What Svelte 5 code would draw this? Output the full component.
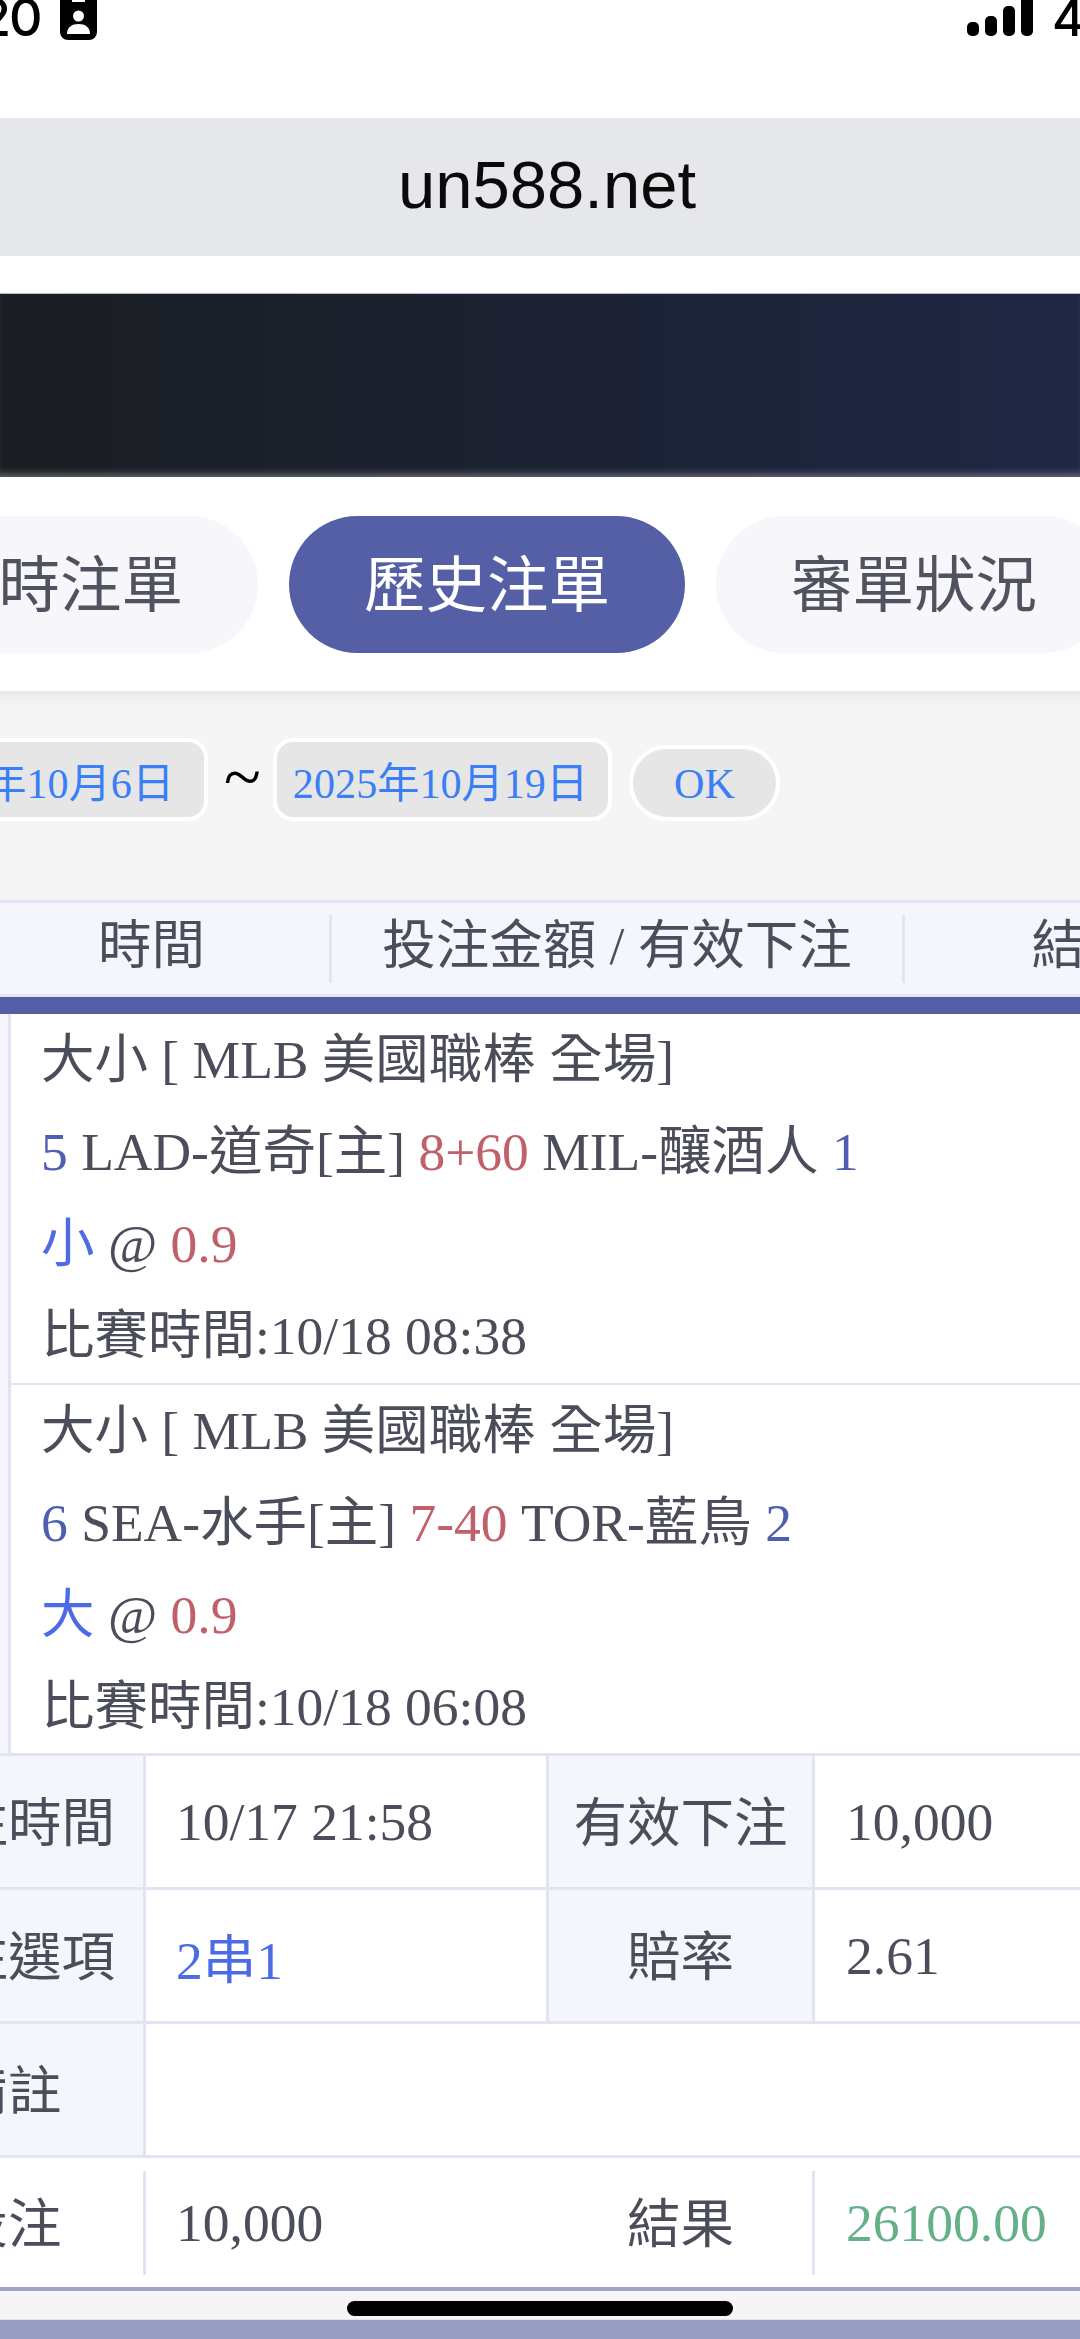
<script>
	const matches = [
		{ home: 5, homeName: 'LAD-道奇[主]', line: '8+60', away: 'MIL-釀酒人', awayScore: 1, pick: '小', time: '10/18 08:38' },
		{ home: 6, homeName: 'SEA-水手[主]', line: '7-40', away: 'TOR-藍鳥', awayScore: 2, pick: '大', time: '10/18 06:08' }
	];
</script>

<div class="page">
	<div class="status">
		<span class="clock">20</span>
		<svg class="contact" width="37" height="40" viewBox="0 0 37 40">
			<path d="M0 -6H37V32a8 8 0 0 1-8 8H8a8 8 0 0 1-8-8Z" fill="#000" />
			<rect x="12" y="0" width="13" height="2" fill="#fff" />
			<circle cx="18.5" cy="16" r="5.5" fill="#fff" />
			<path d="M7 34c0-7 5-10 11.500-10S30 27 30 34Z" fill="#fff" />
		</svg>
		<span class="spacer"></span>
		<svg class="signal" width="66" height="36" viewBox="0 0 66 36">
			<rect x="0" y="22" width="12" height="14" rx="5" />
			<rect x="18" y="16" width="12" height="20" rx="5" />
			<rect x="36" y="6" width="12" height="30" rx="5" />
			<rect x="54" y="-8" width="12" height="44" rx="5" />
		</svg>
		<span class="battery">4</span>
	</div>

	<div class="url">un588.net</div>

	<div class="banner"></div>

	<div class="tabs">
		<div class="tab">即時注單</div>
		<div class="tab active">歷史注單</div>
		<div class="tab">審單狀況</div>
	</div>

	<div class="filter">
		<div class="date first">2025年10月6日</div>
		<span class="tilde">~</span>
		<div class="date second">2025年10月19日</div>
		<div class="ok">OK</div>
	</div>

	<div class="thead">
		<div class="th time">時間</div>
		<div class="th amount">投注金額 / 有效下注</div>
		<div class="th result">結果</div>
	</div>
	<div class="accent"></div>

	<div class="matches">
		{#each matches as m}
			<div class="match">
				<div>大小 [ MLB 美國職棒 全場]</div>
				<div>
					<span class="score">{m.home}</span> {m.homeName}
					<span class="line">{m.line}</span> {m.away}
					<span class="score">{m.awayScore}</span>
				</div>
				<div><span class="pick">{m.pick}</span> @ <span class="line">0.9</span></div>
				<div>比賽時間:{m.time}</div>
			</div>
		{/each}
	</div>

	<div class="detail">
		<div class="row">
			<div class="label c1">下注時間</div>
			<div class="value c2">10/17 21:58</div>
			<div class="label c3">有效下注</div>
			<div class="value c4">10,000</div>
		</div>
		<div class="row">
			<div class="label c1">投注選項</div>
			<div class="value c2 pick">2串1</div>
			<div class="label c3">賠率</div>
			<div class="value c4">2.61</div>
		</div>
		<div class="row">
			<div class="label c1">備註</div>
			<div class="value wide"></div>
		</div>
		<div class="row total">
			<div class="label c1">投注</div>
			<div class="value c2">10,000</div>
			<div class="label c3">結果</div>
			<div class="value c4 win">26100.00</div>
		</div>
	</div>

	<div class="gap"></div>
	<div class="footer"></div>
	<div class="home"></div>
</div>

<style>
	:global(body) {
		margin: 0;
		background: #fff;
	}

	.page {
		position: relative;
		width: 1080px;
		height: 2339px;
		overflow: hidden;
		background: #fff;
		font-family: 'Liberation Serif', 'Noto Sans CJK TC', serif;
		font-size: 53.5px;
		color: #4b4e5a;
	}

	.status {
		display: flex;
		align-items: flex-end;
		height: 40px;
		margin-bottom: 78px;
		overflow: hidden;
		font-family: Inter, sans-serif;
		font-weight: 500;
		font-size: 52px;
		line-height: 50px;
		color: #000;
	}

	.clock {
		flex: none;
		width: 64px;
		margin-left: -21px;
		margin-right: 17px;
		position: relative;
		top: 3px;
		letter-spacing: -2px;
		white-space: nowrap;
	}

	.contact {
		flex: none;
	}

	.spacer {
		flex: 1;
	}

	.signal {
		flex: none;
		margin-bottom: 4px;
		margin-right: 19px;
	}

	.battery {
		flex: none;
		width: 28px;
		overflow: hidden;
		position: relative;
		top: 3px;
		font-size: 50px;
	}

	.url {
		height: 138px;
		background: #e6e7eb;
		display: flex;
		align-items: center;
		justify-content: center;
		padding-left: 14px;
		padding-bottom: 5px;
		box-sizing: border-box;
		font-family: 'Liberation Sans', sans-serif;
		font-size: 67px;
		color: #0a0a0a;
	}

	.banner {
		height: 184px;
		margin-top: 37px;
		box-sizing: border-box;
		border-top: 1px solid #b9bcc2;
		background: linear-gradient(90deg, #1a1d21, #1f2744);
		box-shadow: inset 0 -8px 8px -6px rgba(255, 255, 255, 0.4);
	}

	.tabs {
		position: relative;
		display: flex;
		gap: 31px;
		height: 214px;
		box-sizing: border-box;
		padding-top: 39px;
		margin-left: -138px;
		background: #fff;
		width: 1400px;
		box-shadow: 0 4px 12px rgba(0, 0, 0, 0.07);
		font-family: 'Noto Sans CJK TC', sans-serif;
		font-size: 61.5px;
		color: #50535f;
	}

	.tab {
		flex: none;
		width: 396px;
		height: 137px;
		box-sizing: border-box;
		padding-bottom: 8px;
		border-radius: 69px;
		background: #f6f6fb;
		display: flex;
		align-items: center;
		justify-content: center;
	}

	.tab.active {
		background: #555fa6;
		color: #fff;
	}

	.filter {
		display: flex;
		align-items: flex-end;
		height: 209px;
		box-sizing: border-box;
		padding-top: 47px;
		padding-bottom: 79px;
		margin-left: -132px;
		width: 1400px;
		background: #f5f5f5;
		font-size: 42.2px;
		color: #3a7ff5;
	}

	.date,
	.ok {
		flex: none;
		box-sizing: border-box;
		height: 83px;
		background: #e6e6e6;
		border: 4px solid #fff;
		border-radius: 20px;
		display: flex;
		align-items: center;
		justify-content: center;
		white-space: nowrap;
	}

	.date.first {
		width: 340px;
		padding-left: 4px;
		padding-right: 6px;
	}

	.date.second {
		width: 339px;
		padding-right: 4px;
	}

	.tilde {
		width: 33px;
		margin: 0 16px 6px;
		align-self: center;
		text-align: center;
		font-size: 68px;
		color: #000;
		line-height: 1;
	}

	.ok {
		width: 151px;
		height: 76px;
		margin-left: 17px;
		border-radius: 38px;
	}

	.thead {
		display: flex;
		align-items: center;
		height: 97px;
		box-sizing: border-box;
		border-top: 3px solid #e2e4f3;
		border-bottom: 3px solid #e2e4f3;
		background: #f5f6fd;
		margin-left: -26px;
		width: 1400px;
	}

	.th {
		flex: none;
		height: 68px;
		box-sizing: border-box;
		padding-bottom: 17px;
		display: flex;
		align-items: center;
		justify-content: center;
		white-space: pre;
	}

	.th.time {
		width: 358px;
		border-right: 3px solid #e2e4f3;
	}

	.th.amount {
		width: 573px;
		border-right: 3px solid #e2e4f3;
	}

	.th.result {
		width: 360px;
	}

	.accent {
		height: 18px;
		background: #535ea6;
	}

	.matches {
		background: #f5f6fd;
		padding-left: 8px;
	}

	.match {
		height: 371px;
		box-sizing: border-box;
		background: #fff;
		border-left: 3px solid #e2e4f3;
		border-bottom: 3px solid #e2e4f3;
		padding-left: 30px;
		line-height: 92px;
		margin-top: -1px;
		white-space: nowrap;
	}

	.match:first-child {
		height: 372px;
	}

	.score {
		color: #4d5fae;
	}

	.line {
		color: #c0606b;
	}

	.pick {
		color: #4e6be6;
	}

	.win {
		color: #64b088;
	}

	.detail {
		margin-top: -3px;
		margin-left: -127px;
		width: 1400px;
	}

	.row {
		display: flex;
		height: 134px;
		box-sizing: border-box;
		border-top: 3px solid #e2e4f3;
		white-space: nowrap;
	}

	.label,
	.value {
		flex: none;
		box-sizing: border-box;
		display: flex;
		align-items: center;
	}

	.label {
		justify-content: center;
		padding-bottom: 6px;
		background: #f5f6fb;
	}

	.value {
		background: #fff;
	}

	.c1 {
		width: 270px;
	}

	.c2 {
		width: 406px;
		padding-left: 30px;
		border-left: 3px solid #e2e4f3;
		border-right: 3px solid #e2e4f3;
	}

	.c3 {
		width: 263px;
	}

	.c4 {
		width: 461px;
		padding-left: 31px;
		border-left: 3px solid #e2e4f3;
	}

	.wide {
		flex: 1;
		border-left: 3px solid #e2e4f3;
	}

	.row.total {
		height: 136px;
		align-items: center;
		border-bottom: 4px solid #a0a4c8;
	}

	.total .label,
	.total .value {
		height: 104px;
		background: #fff;
	}

	.total .c2 {
		border-right: none;
	}

	.gap {
		height: 28px;
		background: #f5f5f5;
	}

	.footer {
		height: 40px;
		background: #989cc1;
		border-top: 1px solid #e2e4f3;
	}

	.home {
		position: absolute;
		left: 347px;
		top: 2301px;
		width: 386px;
		height: 15px;
		border-radius: 8px;
		background: #000;
	}
</style>
